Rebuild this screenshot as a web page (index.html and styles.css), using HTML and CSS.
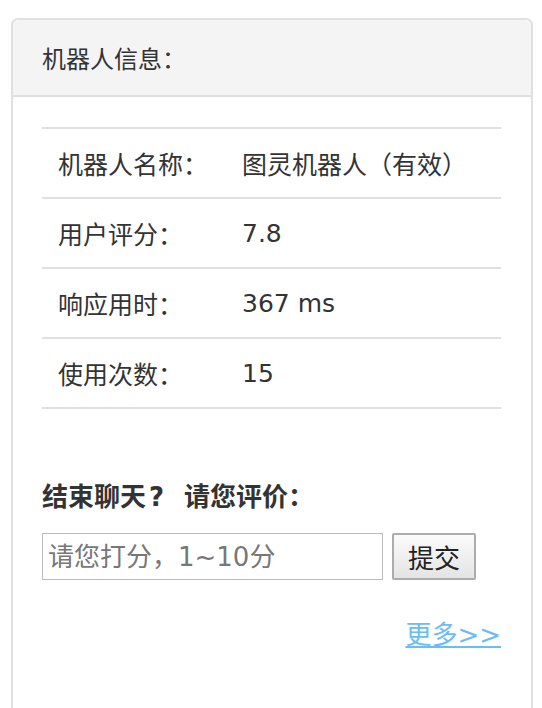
FILE: index.html
```html
<!DOCTYPE html>
<html lang="zh-CN">
<head>
<meta charset="utf-8">
<link rel="stylesheet" href="styles.css">
</head>
<body>
<div class="panel">
  <div class="panel-head">机器人信息：</div>
  <div class="panel-body">
    <div class="info">
      <div class="row"><div class="label">机器人名称：</div><div class="value">图灵机器人（有效）</div></div>
      <div class="row"><div class="label">用户评分：</div><div class="value">7.8</div></div>
      <div class="row"><div class="label">响应用时：</div><div class="value">367 ms</div></div>
      <div class="row"><div class="label">使用次数：</div><div class="value">15</div></div>
    </div>
    <h3 class="rate-title">结束聊天<span class="q">?</span>请您评价：</h3>
    <div class="rate-form">
      <input class="rate-input" type="text" placeholder="请您打分，1~10分">
      <button class="rate-btn" type="button">提交</button>
    </div>
    <div class="more"><a href="#">更多&gt;&gt;</a></div>
  </div>
</div>
</body>
</html>
```

FILE: styles.css
```css
html, body {
  margin: 0;
  background: #fff;
}
body {
  padding: 18px 9px 0 11px;
  font-family: "DejaVu Sans", "Noto Sans CJK SC", sans-serif;
  color: #333;
}
.panel {
  border: 2px solid #e0e0e0;
  border-bottom: none;
  border-radius: 7px 7px 0 0;
  height: 720px;
  box-sizing: border-box;
}
.panel-head {
  background: #f4f4f4;
  border-bottom: 2px solid #dedede;
  border-radius: 6px 6px 0 0;
  height: 77px;
  box-sizing: border-box;
  padding-left: 29px;
  display: flex;
  align-items: center;
  font-size: 24px;
  color: #333;
}
.panel-body {
  padding: 30px 30px 0 29px;
}
.info {
  border-top: 2px solid #e0e0e0;
}
.row {
  display: grid;
  grid-template-columns: 184px 1fr;
  height: 70px;
  box-sizing: border-box;
  border-bottom: 2px solid #e0e0e0;
  align-items: center;
  font-size: 25px;
  color: #333;
}
.label, .value {
  padding-left: 16px;
}
.rate-title {
  margin: 73px 0 0;
  font-size: 26px;
  font-weight: bold;
  color: #333;
  line-height: 30px;
}
.q {
  display: inline-block;
  padding: 0 20px 0 3px;
}
.rate-form {
  display: flex;
  align-items: center;
  gap: 9px;
  margin-top: 21px;
}
.rate-input {
  width: 341px;
  height: 47px;
  box-sizing: border-box;
  border: 1px solid #bbb;
  padding: 0 5px;
  font-family: "DejaVu Sans", "Noto Sans CJK SC", sans-serif;
  font-size: 26px;
  color: #333;
  margin: 0;
}
.rate-input::placeholder {
  color: #777;
}
.rate-btn {
  width: 84px;
  height: 47px;
  box-sizing: border-box;
  border: 2px solid #acacac;
  border-radius: 2px;
  background: linear-gradient(#fbfbfb, #e4e4e4);
  font-family: "Noto Sans CJK SC", sans-serif;
  font-size: 26px;
  color: #222;
  margin: 0;
  padding: 0;
}
.more {
  text-align: right;
  margin-top: 40px;
  font-size: 26px;
  line-height: 30px;
}
.more a {
  color: #6cbcf3;
  text-decoration: underline;
}
```
